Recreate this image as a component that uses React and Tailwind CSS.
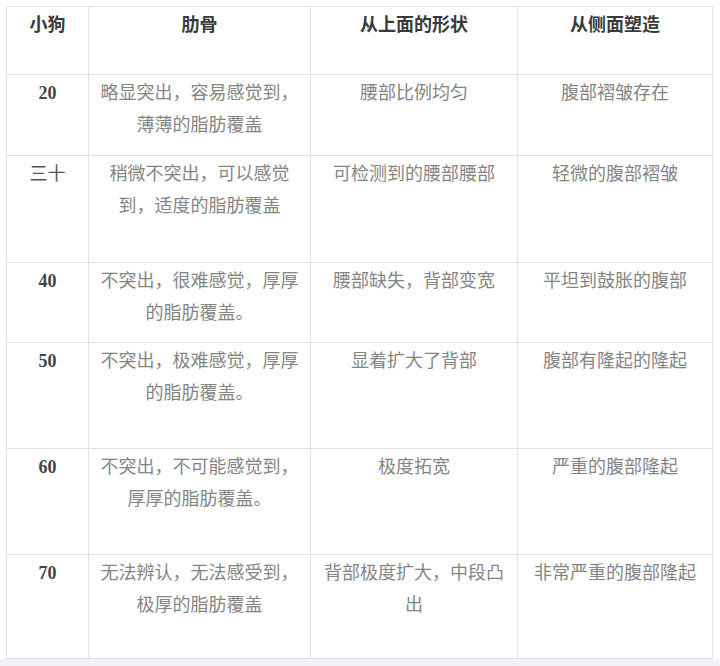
import React from "react";

const rows = [
  { h: "h-[68px]", head: true, cells: ["小狗", "肋骨", "从上面的形状", "从侧面塑造"] },
  { h: "h-[81px]", cells: ["20", "略显突出，容易感觉到，薄薄的脂肪覆盖", "腰部比例均匀", "腹部褶皱存在"] },
  { h: "h-[107px]", cells: ["三十", "稍微不突出，可以感觉到，适度的脂肪覆盖", "可检测到的腰部腰部", "轻微的腹部褶皱"], plainFirst: true },
  { h: "h-[80px]", cells: ["40", "不突出，很难感觉，厚厚的脂肪覆盖。", "腰部缺失，背部变宽", "平坦到鼓胀的腹部"] },
  { h: "h-[106px]", cells: ["50", "不突出，极难感觉，厚厚的脂肪覆盖。", "显着扩大了背部", "腹部有隆起的隆起"] },
  { h: "h-[106px]", cells: ["60", "不突出，不可能感觉到，厚厚的脂肪覆盖。", "极度拓宽", "严重的腹部隆起"] },
  { h: "h-[104px]", cells: ["70", "无法辨认，无法感受到，极厚的脂肪覆盖", "背部极度扩大，中段凸出", "非常严重的腹部隆起"] },
];

const font = { fontFamily: '"Liberation Serif", "Noto Sans CJK SC", serif' };

export default function App() {
  return (
    <div className="w-[720px] h-[666px] bg-white flex flex-col" style={font}>
      <div className="pt-[6px] pl-[6px] flex-none">
        <div className="grid grid-cols-[82px_222px_207px_195px] border-t border-l border-[#e2e2e2] w-[707px]">
          {rows.map((r, ri) =>
            r.cells.map((c, ci) => {
              let cls = "text-[#858585] font-normal";
              if (r.head) cls = "text-[#3a3a3a] font-bold";
              else if (ci === 0 && !r.plainFirst) cls = "text-[#444] font-bold";
              else if (ci === 0 && r.plainFirst) cls = "text-[#555] font-normal";
              return (
                <div
                  key={ri + "-" + ci}
                  className={`${r.h} border-r border-b border-[#e2e2e2] px-[10px] pt-[2px] text-center text-[18px] leading-[32px] ${cls}`}
                >
                  {c}
                </div>
              );
            })
          )}
        </div>
      </div>
      <div className="flex-1 bg-[#f1f1f9]" />
    </div>
  );
}
